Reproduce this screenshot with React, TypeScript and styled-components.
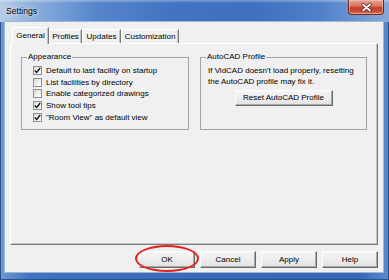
import * as React from "react";
import styled, { createGlobalStyle } from "styled-components";

const GlobalStyle = createGlobalStyle`
  html, body {
    margin: 0;
    padding: 0;
    background: #fff;
  }
  body {
    font-family: "Liberation Sans", Arial, sans-serif;
    font-size: 8px;
    color: #000;
  }
`;

const appearanceOptions = [
  { label: "Default to last facility on startup", checked: true },
  { label: "List facilities by directory", checked: false },
  { label: "Enable categorized drawings", checked: false },
  { label: "Show tool tips", checked: true },
  { label: "\"Room View\" as default view", checked: true },
];

const tabs = [
  { label: "General", width: 37 },
  { label: "Profiles", width: 33 },
  { label: "Updates", width: 39 },
  { label: "Customization", width: 58 },
];

const CheckMark: React.FC = () => (
  <svg width="7" height="7" viewBox="0 0 7 7">
    <path d="M0.8 3.4 L2.7 5.4 L6.2 1" fill="none" stroke="#1c1c1c" strokeWidth="1.5" />
  </svg>
);

const CloseGlyph: React.FC = () => (
  <svg width="11" height="9" viewBox="0 0 11 9">
    <path d="M2 1.5 L9 7.5 M9 1.5 L2 7.5" stroke="#5a1d16" strokeWidth="3.2" strokeLinecap="round" />
    <path d="M2 1.5 L9 7.5 M9 1.5 L2 7.5" stroke="#fff" strokeWidth="1.8" strokeLinecap="round" />
  </svg>
);

export default function App() {
  return (
    <>
      <GlobalStyle />
      <Window>
        <TitleBar>
          <Title>Settings</Title>
          <CloseButton>
            <CloseGlyph />
          </CloseButton>
        </TitleBar>
        <Client>
          <TabStrip>
            {tabs.map((tab, i) => (
              <Tab key={tab.label} $width={tab.width} $active={i === 0}>
                {tab.label}
              </Tab>
            ))}
          </TabStrip>
          <TabPanel>
            <GroupBox $width={168}>
              <Legend>Appearance</Legend>
              <CheckList>
                {appearanceOptions.map((opt) => (
                  <CheckRow key={opt.label}>
                    <CheckBox>{opt.checked && <CheckMark />}</CheckBox>
                    <span>{opt.label}</span>
                  </CheckRow>
                ))}
              </CheckList>
            </GroupBox>
            <GroupBox $width={167}>
              <Legend>AutoCAD Profile</Legend>
              <Description>
                If VidCAD doesn't load properly, resetting
                <br />
                the AutoCAD profile may fix it.
              </Description>
              <CenterRow>
                <DialogButton $width={98} $height={16}>
                  Reset AutoCAD Profile
                </DialogButton>
              </CenterRow>
            </GroupBox>
          </TabPanel>
          <ButtonRow>
            <Highlight>
              <DialogButton $width={56} $height={17}>
                OK
              </DialogButton>
              <Ring />
            </Highlight>
            <DialogButton $width={56} $height={17}>
              Cancel
            </DialogButton>
            <DialogButton $width={56} $height={17}>
              Apply
            </DialogButton>
            <DialogButton $width={56} $height={17}>
              Help
            </DialogButton>
          </ButtonRow>
        </Client>
      </Window>
    </>
  );
}

const Window = styled.div`
  width: 389px;
  height: 280px;
  box-sizing: border-box;
  display: flex;
  flex-direction: column;
  padding: 0 6px 8px 5px;
  background: linear-gradient(90deg, #6f9ad4 0%, #3f72c0 8%, #3a6bb9 50%, #3566b4 92%, #5c8bcc 100%);
  box-shadow: inset 0 0 0 1px #2a4f86;
`;

const TitleBar = styled.div`
  flex: none;
  height: 22px;
  margin: 0 -6px 0 -5px;
  padding: 0 5px 0 6px;
  display: flex;
  align-items: flex-start;
  justify-content: space-between;
  background: linear-gradient(180deg, rgba(255, 255, 255, 0.35) 0, rgba(255, 255, 255, 0) 3px),
    linear-gradient(90deg, #b7cde9 0%, #8fb0dd 8%, #5585cb 25%, #4173c1 45%, #3e70bf 65%, #4f80c8 82%, #86a9da 100%);
`;

const Title = styled.div`
  font-size: 8.6px;
  line-height: 22px;
  color: #000;
  text-shadow: 0 0 3px rgba(255, 255, 255, 0.9), 0 0 6px rgba(255, 255, 255, 0.6);
`;

const CloseButton = styled.div`
  width: 36px;
  height: 15px;
  box-sizing: border-box;
  display: flex;
  align-items: center;
  justify-content: center;
  border: 1px solid #6e2a22;
  border-top: none;
  border-radius: 0 0 4px 4px;
  background: linear-gradient(180deg, #e8a393 0%, #d87a66 40%, #c4412a 55%, #c94b33 80%, #dc7a5e 100%);
  box-shadow: inset 0 0 0 1px rgba(255, 210, 200, 0.45);
`;

const Client = styled.div`
  flex: 1;
  display: flex;
  flex-direction: column;
  padding: 5px 5px 0 5px;
  background: #f0f0f0;
  box-shadow: 0 0 0 1px #9fb8d9;
`;

const TabStrip = styled.div`
  flex: none;
  height: 16px;
  padding-left: 2px;
  display: flex;
  align-items: flex-end;
  position: relative;
  z-index: 1;
`;

const Tab = styled.div<{ $width: number; $active?: boolean }>`
  width: ${(p) => p.$width}px;
  height: ${(p) => (p.$active ? 17 : 14)}px;
  margin-bottom: ${(p) => (p.$active ? -1 : 0)}px;
  box-sizing: border-box;
  display: flex;
  align-items: center;
  justify-content: center;
  padding-bottom: ${(p) => (p.$active ? 2 : 0)}px;
  background: #f0f0f0;
  border-top: 1px solid #fff;
  border-left: 1px solid #fff;
  border-right: 1px solid #7a7a7a;
  box-shadow: inset -1px 0 0 #c4c4c4;
  white-space: nowrap;
`;

const TabPanel = styled.div`
  flex: none;
  height: 202px;
  box-sizing: border-box;
  display: flex;
  align-items: stretch;
  align-self: stretch;
  gap: 11px;
  padding: 8px 10px 0 10px;
  border: 1px solid;
  border-color: #fff #7a7a7a #7a7a7a #fff;
  box-shadow: inset -1px -1px 0 #c4c4c4;
  & > * {
    align-self: flex-start;
  }
`;

const GroupBox = styled.fieldset<{ $width: number }>`
  width: ${(p) => p.$width}px;
  height: 78px;
  box-sizing: border-box;
  margin: 0;
  padding: 0;
  min-inline-size: 0;
  border: 1px solid #a3a3a3;
  display: flex;
  flex-direction: column;
`;

const Legend = styled.legend`
  margin-left: 5px;
  padding: 0 1px;
  font-size: 8px;
  line-height: 10px;
`;

const CheckList = styled.div`
  padding: 3px 0 0 11px;
  display: flex;
  flex-direction: column;
`;

const CheckRow = styled.div`
  height: 11.6px;
  display: flex;
  align-items: center;
  gap: 4px;
  white-space: nowrap;
`;

const CheckBox = styled.span`
  flex: none;
  width: 9px;
  height: 9px;
  box-sizing: border-box;
  display: flex;
  align-items: center;
  justify-content: center;
  border: 1px solid #8e8f8f;
  background: linear-gradient(135deg, #d8d8d8 0%, #f4f4f4 60%, #fff 100%);
`;

const Description = styled.div`
  padding: 3px 0 0 7px;
  line-height: 11px;
  white-space: nowrap;
`;

const CenterRow = styled.div`
  display: flex;
  justify-content: center;
  padding-top: 2.5px;
`;

const DialogButton = styled.button<{ $width: number; $height: number }>`
  width: ${(p) => p.$width}px;
  height: ${(p) => p.$height}px;
  box-sizing: border-box;
  margin: 0;
  padding: 0;
  font: inherit;
  font-size: 8px;
  color: #000;
  background: linear-gradient(180deg, #f6f6f6 0%, #ececec 50%, #e2e2e2 100%);
  border: 1px solid;
  border-color: #fdfdfd #6a6a6a #6a6a6a #fdfdfd;
  box-shadow: inset -1px -1px 0 #a8a8a8;
  display: flex;
  align-items: center;
  justify-content: center;
`;

const ButtonRow = styled.div`
  flex: 1;
  display: flex;
  justify-content: flex-end;
  align-items: flex-start;
  gap: 5px;
  padding-top: 6px;
`;

const Highlight = styled.div`
  position: relative;
  display: flex;
`;

const Ring = styled.span`
  position: absolute;
  left: -4px;
  right: -4px;
  top: -6px;
  bottom: -4px;
  border: 2px solid #e2231f;
  border-radius: 50%;
  pointer-events: none;
`;
